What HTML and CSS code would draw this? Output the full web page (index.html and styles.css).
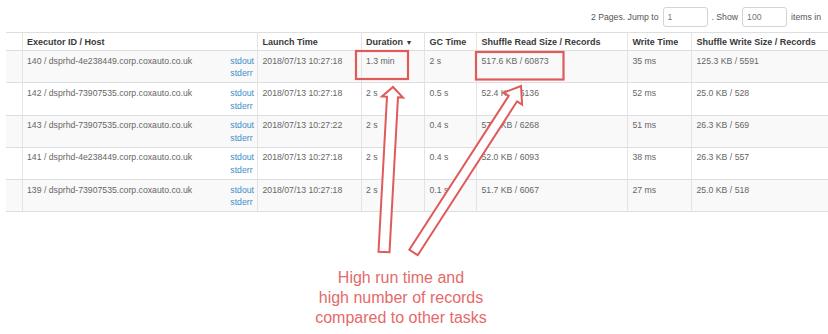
FILE: index.html
```html
<!DOCTYPE html>
<html>
<head>
<meta charset="utf-8">
<link rel="stylesheet" href="styles.css">
</head>
<body>
<div class="page">
  <div class="pager">
    <span>2 Pages. Jump to</span>
    <input class="pager-input" value="1">
    <span>. Show</span>
    <input class="pager-input" value="100">
    <span>items in</span>
  </div>
  <table class="tasks">
    <colgroup>
      <col class="c-idx"><col class="c-host"><col class="c-launch"><col class="c-dur"><col class="c-gc"><col class="c-read"><col class="c-write"><col class="c-wsize">
    </colgroup>
    <thead>
      <tr>
        <th></th>
        <th>Executor ID / Host</th>
        <th>Launch Time</th>
        <th>Duration <span class="sort">▼</span></th>
        <th>GC Time</th>
        <th>Shuffle Read Size / Records</th>
        <th>Write Time</th>
        <th>Shuffle Write Size / Records</th>
      </tr>
    </thead>
    <tbody>
      <tr>
        <td></td>
        <td><div class="host"><span>140 / dsprhd-4e238449.corp.coxauto.co.uk</span><div class="logs"><a>stdout</a><a>stderr</a></div></div></td>
        <td>2018/07/13 10:27:18</td>
        <td>1.3 min</td>
        <td>2 s</td>
        <td>517.6 KB / 60873</td>
        <td>35 ms</td>
        <td>125.3 KB / 5591</td>
      </tr>
      <tr>
        <td></td>
        <td><div class="host"><span>142 / dsprhd-73907535.corp.coxauto.co.uk</span><div class="logs"><a>stdout</a><a>stderr</a></div></div></td>
        <td>2018/07/13 10:27:18</td>
        <td>2 s</td>
        <td>0.5 s</td>
        <td>52.4 KB / 6136</td>
        <td>52 ms</td>
        <td>25.0 KB / 528</td>
      </tr>
      <tr>
        <td></td>
        <td><div class="host"><span>143 / dsprhd-73907535.corp.coxauto.co.uk</span><div class="logs"><a>stdout</a><a>stderr</a></div></div></td>
        <td>2018/07/13 10:27:22</td>
        <td>2 s</td>
        <td>0.4 s</td>
        <td>57.3 KB / 6268</td>
        <td>51 ms</td>
        <td>26.3 KB / 569</td>
      </tr>
      <tr>
        <td></td>
        <td><div class="host"><span>141 / dsprhd-4e238449.corp.coxauto.co.uk</span><div class="logs"><a>stdout</a><a>stderr</a></div></div></td>
        <td>2018/07/13 10:27:18</td>
        <td>2 s</td>
        <td>0.4 s</td>
        <td>52.0 KB / 6093</td>
        <td>38 ms</td>
        <td>26.3 KB / 557</td>
      </tr>
      <tr>
        <td></td>
        <td><div class="host"><span>139 / dsprhd-73907535.corp.coxauto.co.uk</span><div class="logs"><a>stdout</a><a>stderr</a></div></div></td>
        <td>2018/07/13 10:27:18</td>
        <td>2 s</td>
        <td>0.1 s</td>
        <td>51.7 KB / 6067</td>
        <td>27 ms</td>
        <td>25.0 KB / 518</td>
      </tr>
    </tbody>
  </table>
  <div class="note">High run time and<br>high number of records<br>compared to other tasks</div>
</div>
<svg class="overlay" width="828" height="334" viewBox="0 0 828 334" xmlns="http://www.w3.org/2000/svg">
  <rect x="356" y="51" width="52" height="28" fill="none" stroke="#e05a5a" stroke-width="2.2"/>
  <rect x="476" y="52" width="87.5" height="27.5" fill="none" stroke="#e05a5a" stroke-width="2.2"/>
  <polygon points="378.5,251.7 387,96.7 382,96.4 393,87 403,97.6 398,97.3 389.5,252.3" fill="#fff" stroke="#e05a5a" stroke-width="2"/>
  <polygon points="409.3,249.8 508.7,95.9 503.7,92.6 521,86 522.1,104.6 517.1,101.3 417.7,255.2" fill="#fff" stroke="#e05a5a" stroke-width="2"/>
</svg>
</body>
</html>
```
FILE: styles.css
```css
html, body {
  margin: 0;
  padding: 0;
  overflow: hidden;
  background: #fff;
}
body {
  font-family: "Liberation Sans", Arial, sans-serif;
  position: relative;
  width: 828px;
  height: 334px;
}
.page {
  width: 844px;
  padding: 0 6px;
}
.pager {
  display: flex;
  justify-content: flex-end;
  align-items: center;
  gap: 3px;
  padding-top: 7px;
  padding-right: 29px;
  height: 20px;
  font-size: 8.7px;
  color: #555;
  white-space: nowrap;
}
.pager-input {
  box-sizing: border-box;
  width: 45px;
  height: 20px;
  margin: 0 1px;
  padding: 0 4px;
  border: 1px solid #d4d4d4;
  border-radius: 3px;
  font-family: inherit;
  font-size: 8.7px;
  color: #777;
  background: #fff;
}
.tasks {
  margin-top: 5px;
  width: 844px;
  table-layout: fixed;
  border-collapse: collapse;
  font-size: 8.7px;
  color: #666;
}
.c-idx { width: 16px; }
.c-host { width: 235.5px; }
.c-launch { width: 103.5px; }
.c-dur { width: 63.5px; }
.c-gc { width: 52px; }
.c-read { width: 151px; }
.c-write { width: 64px; }
.c-wsize { width: 159px; }
.tasks th, .tasks td {
  border: 1px solid #e4e4e4;
  border-top-color: #dedede;
  border-bottom-color: #dedede;
  text-align: left;
  white-space: nowrap;
  overflow: hidden;
}
.tasks th:first-child, .tasks td:first-child { border-left: none; }
.tasks th:last-child, .tasks td:last-child { border-right: none; }
.tasks th {
  height: 17px;
  padding: 0 4px 0 4.5px;
  font-size: 9px;
  font-weight: bold;
  color: #383838;
  vertical-align: middle;
}
.sort {
  font-size: 7px;
  margin-left: 0;
}
.tasks td {
  height: 32.3px;
  box-sizing: border-box;
  padding: 3.6px 3px 0 4.5px;
  line-height: 12.7px;
  vertical-align: top;
}
.tasks tbody tr:nth-child(odd) td { background: #f9f9f9; }
.host {
  display: flex;
  justify-content: space-between;
}
.logs {
  display: flex;
  flex-direction: column;
}
.logs a {
  color: #3d8ec9;
  text-decoration: none;
}
.note {
  width: 790px;
  margin-top: 56px;
  text-align: center;
  font-size: 16px;
  line-height: 20px;
  color: #e46a6a;
}
.overlay {
  position: absolute;
  top: 0;
  left: 0;
  pointer-events: none;
}
```
